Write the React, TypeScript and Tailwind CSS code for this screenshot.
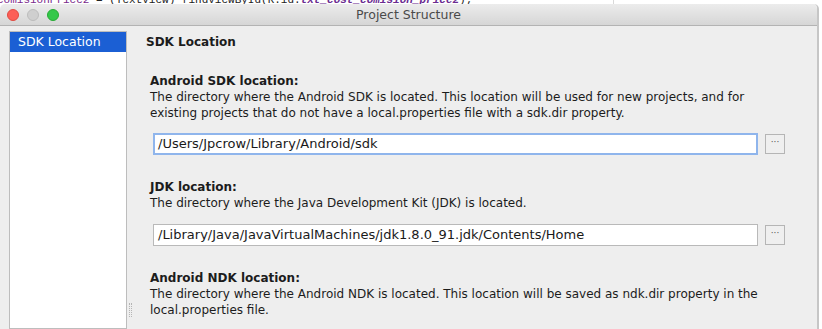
import React from 'react';

const uiFont = { fontFamily: '"DejaVu Sans", "Open Sans", sans-serif' };

function TrafficLight({ color, border }: { color: string; border: string }) {
  return <span className={`block h-[12px] w-[12px] rounded-full border ${color} ${border}`} />;
}

function PathField({ value, focused }: { value: string; focused?: boolean }) {
  return (
    <div className="flex items-center">
      <div
        className={`ml-[7px] flex h-[22px] w-[605px] items-center bg-white text-[13px] text-[#1a1a1a] ${
          focused ? 'border-2 border-[#8fb5ec] px-[3px]' : 'border border-[#b9b9b9] px-[4px]'
        }`}
      >
        {value}
      </div>
      <button className="ml-[7px] flex h-[20px] w-[20px] items-start justify-center border border-[#b5b5b5] bg-[#efefef] text-[9px] leading-[14px] text-[#555]">
        ···
      </button>
    </div>
  );
}

function Section({
  title,
  children,
}: {
  title: string;
  children: React.ReactNode;
}) {
  return (
    <div className="ml-[4px]">
      <div className="text-[12px] font-bold leading-[16px] text-[#1c1c1c]">{title}</div>
      <div className="text-[12px] leading-[16px] text-[#1c1c1c]">{children}</div>
    </div>
  );
}

export default function App() {
  return (
    <div className="relative flex h-[329px] w-[822px] flex-col overflow-hidden bg-white" style={uiFont}>
      {/* code editor peeking out behind the dialog */}
      <div className="relative h-[4px] overflow-hidden">
        <div
          className="-ml-[3px] -mt-[6px] whitespace-pre text-[11px] leading-[12px] text-[#222]"
          style={{ fontFamily: '"Liberation Mono", monospace' }}
        >
          <span className="text-[#7a2a8c]">comisionPrice2</span> = (TextView) findViewById(R.id.
          <span className="font-bold italic text-[#6b2c91]">txt_cost_comision_price2</span>);
        </div>
        <div className="absolute left-[613px] top-0 h-[4px] w-px bg-[#d9d9d9]" />
      </div>

      <div className="flex w-[819px] flex-1 flex-col overflow-hidden rounded-t-[5px] border-r-2 border-[#c6c6c6]">
        {/* title bar */}
        <div className="relative flex h-[22px] items-center border-b border-[#b3b3b3] bg-gradient-to-b from-[#ececec] to-[#d6d6d6]">
          <div className="ml-[7px] flex gap-[8px]">
            <TrafficLight color="bg-[#fc5f57]" border="border-[#df4a41]" />
            <TrafficLight color="bg-[#cfcfcf]" border="border-[#bcbcbc]" />
            <TrafficLight color="bg-[#34c84a]" border="border-[#27aa35]" />
          </div>
          <div className="absolute inset-x-0 text-center text-[12.5px] leading-[22px] text-[#4a4a4a]">
            Project Structure
          </div>
        </div>

        {/* dialog body */}
        <div className="flex flex-1 bg-[#eeeeee]">
          <div className="ml-[9px] mt-[5px] w-[118px] border border-[#bdbdbd] bg-white">
            <div className="flex h-[20px] items-center bg-[#1b5fd4] pl-[8px] text-[12.5px] text-white">
              SDK Location
            </div>
          </div>

          <div className="flex w-[19px] flex-col justify-end pb-[12px] pl-[2px]">
            <div className="h-[14px] w-[3px] border-x border-dotted border-[#b5b5b5]" />
          </div>

          <div className="flex flex-1 flex-col pt-[8px]">
            <div className="text-[12px] font-bold leading-[16px] text-[#1c1c1c]">SDK Location</div>

            <div className="mt-[23px]">
              <Section title="Android SDK location:">
                The directory where the Android SDK is located. This location will be used for new projects, and for
                <br />
                existing projects that do not have a local.properties file with a sdk.dir property.
              </Section>
            </div>
            <div className="mt-[12px]">
              <PathField value="/Users/Jpcrow/Library/Android/sdk" focused />
            </div>

            <div className="mt-[24px]">
              <Section title="JDK location:">The directory where the Java Development Kit (JDK) is located.</Section>
            </div>
            <div className="mt-[13px]">
              <PathField value="/Library/Java/JavaVirtualMachines/jdk1.8.0_91.jdk/Contents/Home" />
            </div>

            <div className="mt-[24px]">
              <Section title="Android NDK location:">
                The directory where the Android NDK is located. This location will be saved as ndk.dir property in the
                <br />
                local.properties file.
              </Section>
            </div>
          </div>
        </div>
      </div>
    </div>
  );
}
